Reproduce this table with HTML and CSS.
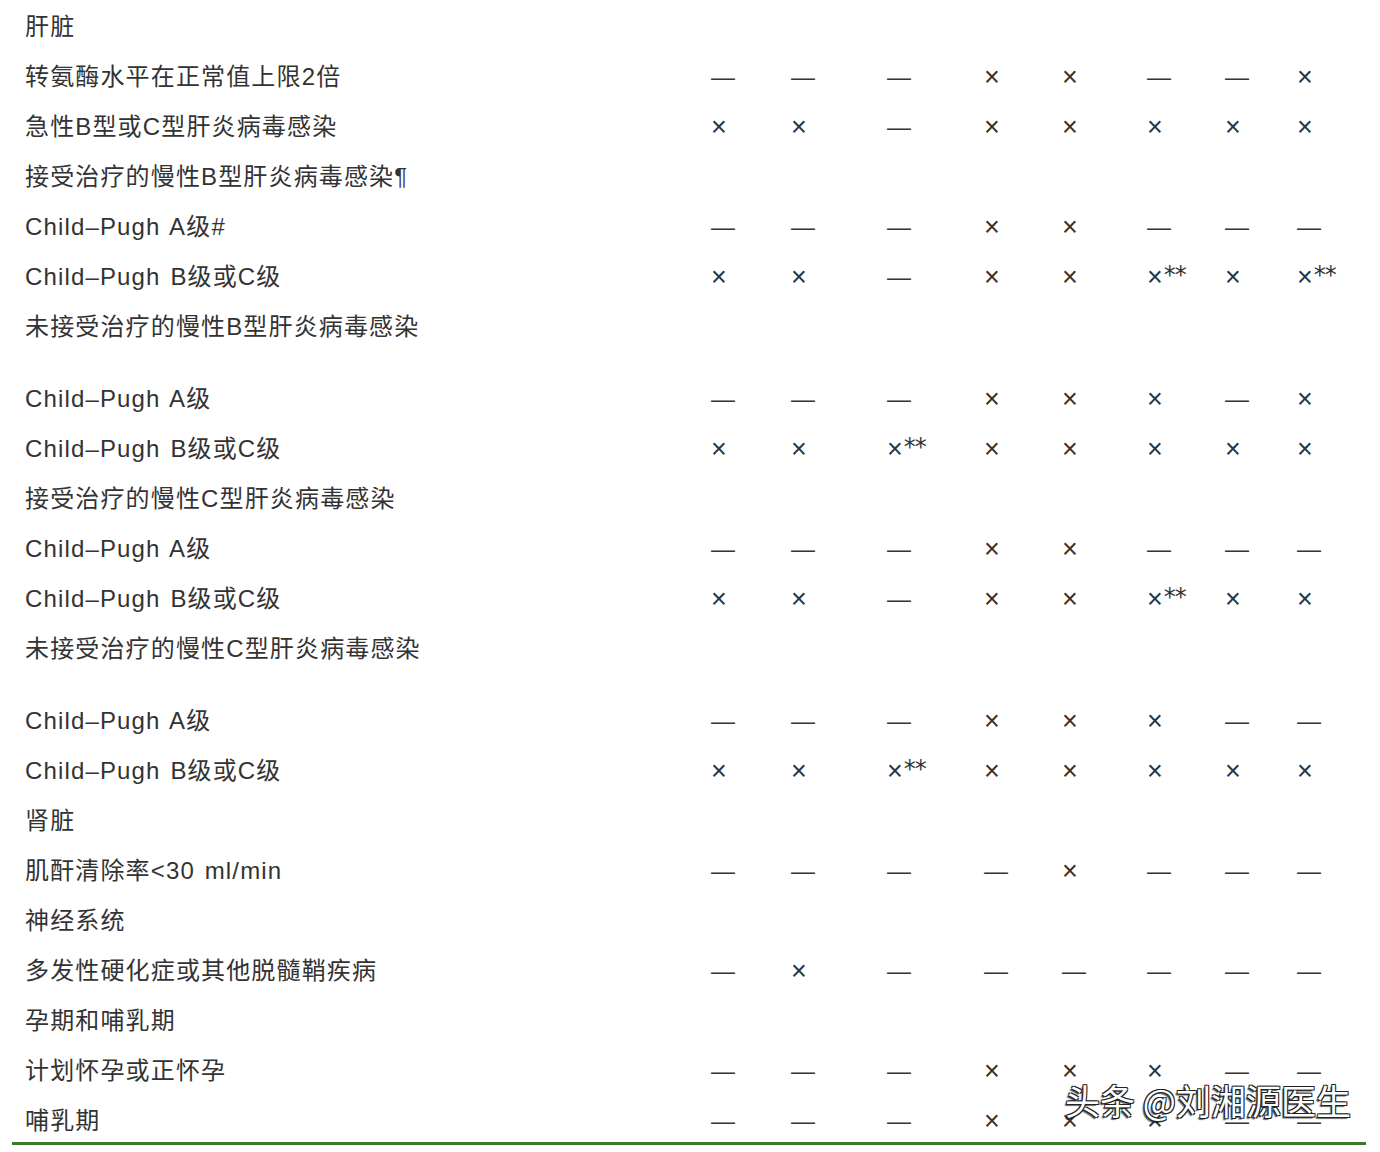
FILE: index.html
```html
<!DOCTYPE html>
<html lang="zh-CN">
<head>
<meta charset="utf-8">
<title>肝脏 肾脏 神经系统 孕期</title>
<link rel="stylesheet" href="styles.css">
</head>
<body>
<div class="sheet">
<table class="grid">
<colgroup>
<col class="c0"><col class="c1"><col class="c2"><col class="c3"><col class="c4"><col class="c5"><col class="c6"><col class="c7"><col class="c8">
</colgroup>
<tbody>
<tr><td class="label">肝脏</td><td></td><td></td><td></td><td></td><td></td><td></td><td></td><td></td></tr>
<tr><td class="label">转氨酶水平在正常值上限2倍</td><td class="na">—</td><td class="na">—</td><td class="na">—</td><td class="no">×</td><td class="no">×</td><td class="na">—</td><td class="na">—</td><td class="no">×</td></tr>
<tr><td class="label">急性B型或C型肝炎病毒感染</td><td class="no">×</td><td class="no">×</td><td class="na">—</td><td class="no">×</td><td class="no">×</td><td class="no">×</td><td class="no">×</td><td class="no">×</td></tr>
<tr><td class="label">接受治疗的慢性B型肝炎病毒感染¶</td><td></td><td></td><td></td><td></td><td></td><td></td><td></td><td></td></tr>
<tr><td class="label">Child–Pugh A级#</td><td class="na">—</td><td class="na">—</td><td class="na">—</td><td class="no">×</td><td class="no">×</td><td class="na">—</td><td class="na">—</td><td class="na">—</td></tr>
<tr><td class="label">Child–Pugh B级或C级</td><td class="no">×</td><td class="no">×</td><td class="na">—</td><td class="no">×</td><td class="no">×</td><td class="no">×<span class="ast">**</span></td><td class="no">×</td><td class="no">×<span class="ast">**</span></td></tr>
<tr class="tall"><td class="label">未接受治疗的慢性B型肝炎病毒感染</td><td></td><td></td><td></td><td></td><td></td><td></td><td></td><td></td></tr>
<tr><td class="label">Child–Pugh A级</td><td class="na">—</td><td class="na">—</td><td class="na">—</td><td class="no">×</td><td class="no">×</td><td class="no">×</td><td class="na">—</td><td class="no">×</td></tr>
<tr><td class="label">Child–Pugh B级或C级</td><td class="no">×</td><td class="no">×</td><td class="no">×<span class="ast">**</span></td><td class="no">×</td><td class="no">×</td><td class="no">×</td><td class="no">×</td><td class="no">×</td></tr>
<tr><td class="label">接受治疗的慢性C型肝炎病毒感染</td><td></td><td></td><td></td><td></td><td></td><td></td><td></td><td></td></tr>
<tr><td class="label">Child–Pugh A级</td><td class="na">—</td><td class="na">—</td><td class="na">—</td><td class="no">×</td><td class="no">×</td><td class="na">—</td><td class="na">—</td><td class="na">—</td></tr>
<tr><td class="label">Child–Pugh B级或C级</td><td class="no">×</td><td class="no">×</td><td class="na">—</td><td class="no">×</td><td class="no">×</td><td class="no">×<span class="ast">**</span></td><td class="no">×</td><td class="no">×</td></tr>
<tr class="tall"><td class="label">未接受治疗的慢性C型肝炎病毒感染</td><td></td><td></td><td></td><td></td><td></td><td></td><td></td><td></td></tr>
<tr><td class="label">Child–Pugh A级</td><td class="na">—</td><td class="na">—</td><td class="na">—</td><td class="no">×</td><td class="no">×</td><td class="no">×</td><td class="na">—</td><td class="na">—</td></tr>
<tr><td class="label">Child–Pugh B级或C级</td><td class="no">×</td><td class="no">×</td><td class="no">×<span class="ast">**</span></td><td class="no">×</td><td class="no">×</td><td class="no">×</td><td class="no">×</td><td class="no">×</td></tr>
<tr><td class="label">肾脏</td><td></td><td></td><td></td><td></td><td></td><td></td><td></td><td></td></tr>
<tr><td class="label">肌酐清除率&lt;30 ml/min</td><td class="na">—</td><td class="na">—</td><td class="na">—</td><td class="na">—</td><td class="no">×</td><td class="na">—</td><td class="na">—</td><td class="na">—</td></tr>
<tr><td class="label">神经系统</td><td></td><td></td><td></td><td></td><td></td><td></td><td></td><td></td></tr>
<tr><td class="label">多发性硬化症或其他脱髓鞘疾病</td><td class="na">—</td><td class="no">×</td><td class="na">—</td><td class="na">—</td><td class="na">—</td><td class="na">—</td><td class="na">—</td><td class="na">—</td></tr>
<tr><td class="label">孕期和哺乳期</td><td></td><td></td><td></td><td></td><td></td><td></td><td></td><td></td></tr>
<tr><td class="label">计划怀孕或正怀孕</td><td class="na">—</td><td class="na">—</td><td class="na">—</td><td class="no">×</td><td class="no">×</td><td class="no">×</td><td class="na">—</td><td class="na">—</td></tr>
<tr><td class="label">哺乳期</td><td class="na">—</td><td class="na">—</td><td class="na">—</td><td class="no">×</td><td class="no">×</td><td class="no">×</td><td class="na">—</td><td class="na">—</td></tr>
</tbody>
</table>
<div class="watermark">头条 @刘湘源医生</div>
</div>
</body>
</html>
```

FILE: styles.css
```css
html, body {
  margin: 0;
  padding: 0;
  background: #ffffff;
}

body {
  font-family: "Noto Sans CJK SC", "Noto Sans", sans-serif;
  color: #333333;
}

.sheet {
  position: relative;
  margin-left: 12px;
  width: 1354px;
  border-bottom: 3px solid #3b7a2b;
}

.grid {
  width: 1354px;
  table-layout: fixed;
  border-collapse: collapse;
  border-spacing: 0;
  margin-top: -2px;
}

.c0 { width: 699px; }
.c1 { width: 80px; }
.c2 { width: 96px; }
.c3 { width: 97px; }
.c4 { width: 78px; }
.c5 { width: 85px; }
.c6 { width: 78px; }
.c7 { width: 72px; }
.c8 { width: 69px; }

.grid tr {
  height: 50px;
}

.grid tr.tall {
  height: 72px;
}

.grid td {
  padding: 14px 0 0 0;
  line-height: 30px;
  font-size: 24px;
  font-family: "Liberation Sans", "Noto Sans CJK SC", sans-serif;
  vertical-align: top;
  text-align: left;
  white-space: nowrap;
}

.grid td.label {
  padding-left: 13px;
  letter-spacing: 1.15px;
  word-spacing: 2px;
}

.grid td.no {
  font-size: 27px;
}

.ast {
  font-family: "DejaVu Sans", sans-serif;
  font-size: 24px;
  letter-spacing: -1px;
  margin-left: 1px;
  position: relative;
  top: -3px;
}

.watermark {
  position: absolute;
  left: 1053px;
  bottom: 22px;
  font-size: 35px;
  line-height: 40px;
  color: #ffffff;
  letter-spacing: 0;
  font-family: "Noto Sans CJK SC", sans-serif;
  text-shadow: -1px 1px 0 #222, 1px -1px 0 #222, -1px -1px 0 #222, 1px 1px 0 #222, -2px 2px 1px rgba(0,0,0,0.6);
}
```
